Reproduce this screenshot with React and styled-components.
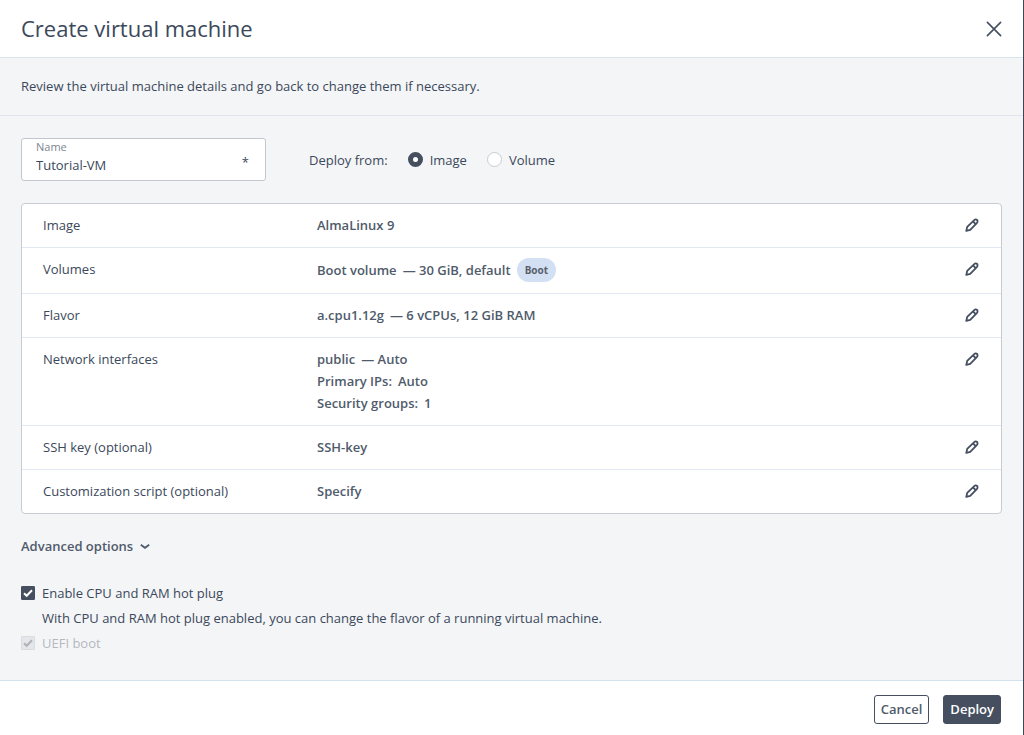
import React, { useState } from "react";
import styled, { createGlobalStyle } from "styled-components";

const ink = "#3b485b";
const inkSoft = "#4f5b6b";
const slate = "#454f5f";

const GlobalStyle = createGlobalStyle`
  *, *::before, *::after { box-sizing: border-box; }
  body {
    margin: 0;
    background: #f4f5f7;
    color: ${ink};
    font: 400 13px/22px "Open Sans", "Noto Sans", sans-serif;
  }
  button, input { font: inherit; color: inherit; }
`;

const Dialog = styled.div`
  display: flex;
  flex-direction: column;
  min-height: 100vh;
  border-right: 1px solid #3d4759;
`;

const Header = styled.header`
  display: flex;
  align-items: center;
  justify-content: space-between;
  height: 58px;
  padding: 0 20px 0 21px;
  background: #fff;
  border-bottom: 1px solid #dbe3ec;
`;

const Title = styled.h1`
  margin: 0;
  font-size: 22px;
  line-height: 29px;
  font-weight: 400;
`;

const IconButton = styled.button`
  display: flex;
  align-items: center;
  justify-content: center;
  width: ${(p) => p.$size}px;
  height: ${(p) => p.$size}px;
  padding: 0;
  border: 0;
  background: none;
  color: ${slate};
  cursor: pointer;
`;

const Intro = styled.p`
  margin: 0;
  padding: 17px 21px 18px;
  border-bottom: 1px solid #e0e4ec;
`;

const Content = styled.main`
  flex: 1;
  padding: 22px 21px 24px;
`;

const TopFields = styled.div`
  display: flex;
  align-items: center;
  gap: 43px;
  margin-bottom: 22px;
`;

const Field = styled.label`
  display: grid;
  grid-template-columns: 1fr auto;
  grid-template-rows: 15px 20px;
  width: 245px;
  height: 43px;
  padding: 0 14px;
  background: #fff;
  border: 1px solid #c3c6ce;
  border-radius: 3px;
`;

const FieldLabel = styled.span`
  grid-column: 1 / -1;
  font-size: 11px;
  line-height: 15px;
  color: #7d8592;
`;

const FieldInput = styled.input`
  width: 100%;
  height: 22px;
  padding: 0;
  border: 0;
  outline: 0;
  background: none;
`;

const Required = styled.span`
  line-height: 16px;
  padding-right: 2px;
`;

const RadioGroup = styled.fieldset`
  display: flex;
  align-items: center;
  gap: 20px;
  margin: 0;
  padding: 0;
  border: 0;
`;

const Choice = styled.label`
  display: flex;
  align-items: center;
  gap: 7px;
  color: ${(p) => (p.$disabled ? "#b4b8be" : "inherit")};
`;

const Radio = styled.input`
  appearance: none;
  width: 15px;
  height: 15px;
  margin: 0;
  background: #fff;
  border: 1px solid #c8cbd2;
  border-radius: 50%;
  &:checked { border: 5px solid ${slate}; }
`;

const Panel = styled.div`
  background: #fff;
  border: 1px solid #c8cbd3;
  border-radius: 4px;
`;

const Table = styled.table`
  width: 100%;
  border-spacing: 0;
  tr + tr > * { border-top: 1px solid #e1e8f1; }
  th, td {
    padding: 10px 0 11px;
    vertical-align: top;
    text-align: left;
  }
`;

const RowLabel = styled.th`
  width: 295px;
  && { padding-left: 21px; }
  font-weight: 400;
`;

const RowValue = styled.td`
  color: ${inkSoft};
  font-weight: 600;
`;

const RowAction = styled.td`
  width: 40px;
`;

const Line = styled.div`
  display: flex;
  align-items: center;
  gap: 6px;
`;

const Tag = styled.span`
  padding: 0 8px;
  border-radius: 12px;
  background: #d3e0f4;
  color: #595f69;
  font-size: 10px;
  line-height: 24px;
  font-weight: 700;
`;

const Disclosure = styled.button`
  display: flex;
  align-items: center;
  gap: 6px;
  margin: 21px 0 25px;
  padding: 0;
  border: 0;
  background: none;
  color: ${inkSoft};
  font-weight: 600;
  cursor: pointer;
`;

const Options = styled.div`
  display: flex;
  flex-direction: column;
  gap: 3px;
`;

const Hint = styled.p`
  margin: 0 0 0 21px;
`;

const CheckWrap = styled.span`
  display: grid;
  width: 14px;
  height: 14px;
  > * { grid-area: 1 / 1; }
  svg { pointer-events: none; }
`;

const CheckInput = styled.input`
  appearance: none;
  width: 14px;
  height: 14px;
  margin: 0;
  border: 1px solid #c8cbd2;
  border-radius: 1px;
  background: #fff;
  & + svg { visibility: hidden; }
  &:checked { background: ${slate}; border-color: ${slate}; color: #fff; }
  &:checked + svg { visibility: visible; }
  &&:disabled { background: #e4e6ea; border-color: #d9dce0; }
`;

const Footer = styled.footer`
  display: flex;
  justify-content: flex-end;
  gap: 14px;
  padding: 14px 22px 11px;
  background: #fff;
  border-top: 1px solid #d3e0ee;
`;

const Button = styled.button`
  height: 29px;
  padding: 0 6px 1px;
  border: 1px solid ${slate};
  border-radius: 3px;
  background: ${(p) => (p.$primary ? slate : "#fff")};
  color: ${(p) => (p.$primary ? "#fff" : inkSoft)};
  font-weight: 600;
  line-height: 20px;
  cursor: pointer;
`;

function PencilIcon() {
  return (
    <svg width="14" height="14" viewBox="0 0 14 14" fill="none" stroke="currentColor" strokeWidth="1.8" strokeLinejoin="round" aria-hidden="true">
      <path d="M1.3 12.9l.9-4L9 2.3c.9-.9 2.4-1 3.1-.3s.6 2.2-.3 3.1L5.2 11.8z" />
      <path d="M8 3.4l2.6 2.6" />
    </svg>
  );
}

function CheckBox({ label, disabled }) {
  const [checked, setChecked] = useState(true);
  return (
    <Choice $disabled={disabled}>
      <CheckWrap>
        <CheckInput type="checkbox" checked={checked} disabled={disabled} onChange={(e) => setChecked(e.target.checked)} />
        <svg width="14" height="14" viewBox="0 0 14 14" fill="none" stroke={disabled ? "#aeb2b9" : "#fff"} strokeWidth="2" aria-hidden="true">
          <path d="M3 7.2l2.7 2.6L11 4.3" />
        </svg>
      </CheckWrap>
      {label}
    </Choice>
  );
}

const rows = [
  { label: "Image", lines: [["AlmaLinux 9"]] },
  { label: "Volumes", lines: [["Boot volume", "— 30 GiB, default"]], tag: "Boot" },
  { label: "Flavor", lines: [["a.cpu1.12g", "— 6 vCPUs, 12 GiB RAM"]] },
  { label: "Network interfaces", lines: [["public", "— Auto"], ["Primary IPs:", "Auto"], ["Security groups:", "1"]] },
  { label: "SSH key (optional)", lines: [["SSH-key"]] },
  { label: "Customization script (optional)", lines: [["Specify"]] },
];

export default function App() {
  const [source, setSource] = useState("Image");
  const [name, setName] = useState("Tutorial-VM");
  return (
    <>
      <GlobalStyle />
      <Dialog role="dialog" aria-labelledby="dialog-title">
        <Header>
          <Title id="dialog-title">Create virtual machine</Title>
          <IconButton $size={18} aria-label="Close">
            <svg width="16" height="16" viewBox="0 0 16 16" fill="none" stroke="currentColor" strokeWidth="1.6" strokeLinecap="round" aria-hidden="true">
              <path d="M1.4 1.4l13.2 13.2M14.6 1.4L1.4 14.6" />
            </svg>
          </IconButton>
        </Header>
        <Intro>Review the virtual machine details and go back to change them if necessary.</Intro>
        <Content>
          <TopFields>
            <Field>
              <FieldLabel>Name</FieldLabel>
              <FieldInput required value={name} onChange={(e) => setName(e.target.value)} />
              <Required aria-hidden="true">*</Required>
            </Field>
            <RadioGroup aria-label="Deploy from">
              <span>Deploy from:</span>
              {["Image", "Volume"].map((option) => (
                <Choice key={option}>
                  <Radio type="radio" name="source" checked={source === option} onChange={() => setSource(option)} />
                  {option}
                </Choice>
              ))}
            </RadioGroup>
          </TopFields>
          <Panel>
            <Table>
              <tbody>
                {rows.map((row) => (
                  <tr key={row.label}>
                    <RowLabel scope="row">{row.label}</RowLabel>
                    <RowValue>
                      {row.lines.map((parts) => (
                        <Line key={parts[0]}>
                          {parts.map((part) => <span key={part}>{part}</span>)}
                          {row.tag && <Tag>{row.tag}</Tag>}
                        </Line>
                      ))}
                    </RowValue>
                    <RowAction>
                      <IconButton $size={22} aria-label={`Edit ${row.label}`}><PencilIcon /></IconButton>
                    </RowAction>
                  </tr>
                ))}
              </tbody>
            </Table>
          </Panel>
          <Disclosure aria-expanded="false">
            Advanced options
            <svg width="12" height="12" viewBox="0 0 12 12" fill="none" stroke="currentColor" strokeWidth="1.8" aria-hidden="true">
              <path d="M1.8 4.8L6 7.8l4.2-3" />
            </svg>
          </Disclosure>
          <Options>
            <CheckBox label="Enable CPU and RAM hot plug" />
            <Hint>With CPU and RAM hot plug enabled, you can change the flavor of a running virtual machine.</Hint>
            <CheckBox label="UEFI boot" disabled />
          </Options>
        </Content>
        <Footer>
          <Button>Cancel</Button>
          <Button $primary>Deploy</Button>
        </Footer>
      </Dialog>
    </>
  );
}
